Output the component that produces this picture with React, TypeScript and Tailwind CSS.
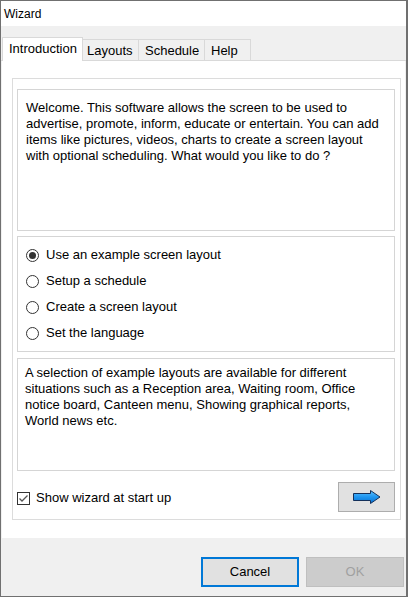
import React from "react";

const font = { fontFamily: '"Liberation Sans", Arial, sans-serif' };

function Radio({ checked, label }: { checked?: boolean; label: string }) {
  return (
    <div className="flex h-[26px] items-center">
      <div className="flex h-[13px] w-[13px] items-center justify-center rounded-full border border-[#333333] bg-white">
        {checked && <div className="h-[7px] w-[7px] rounded-full bg-[#333333]" />}
      </div>
      <span className="ml-[7px] text-[13px] leading-[16px] text-black">{label}</span>
    </div>
  );
}

export default function App() {
  return (
    <div
      className="flex h-[597px] w-[408px] flex-col border border-r-2 border-[#707070] bg-[#f0f0f0]"
      style={font}
    >
      {/* title bar */}
      <div className="flex h-[25px] shrink-0 items-center bg-white pl-[3px] text-[12px] text-black">
        Wizard
      </div>

      {/* tabs */}
      <div className="flex h-[35px] shrink-0 items-end border-b border-[#d9d9d9] pl-[1px] text-[13px] text-black">
        <div className="relative z-10 -mb-px flex h-[24px] w-[81px] items-start border border-b-0 border-[#d9d9d9] bg-white pl-[6px] pt-[3px] leading-[16px]">
          Introduction
        </div>
        <div className="flex h-[21px] w-[56px] items-start border-r border-t border-[#d9d9d9] pl-[4px] pt-[3px] leading-[16px]">
          Layouts
        </div>
        <div className="flex h-[21px] w-[66px] items-start border-r border-t border-[#d9d9d9] pl-[6px] pt-[3px] leading-[16px]">
          Schedule
        </div>
        <div className="flex h-[21px] w-[46px] items-start border-r border-t border-[#d9d9d9] pl-[6px] pt-[3px] leading-[16px]">
          Help
        </div>
      </div>

      {/* tab panel */}
      <div className="mx-[1px] flex h-[477px] shrink-0 flex-col bg-white pl-[10px] pt-[17px]">
        <div className="flex h-[442px] w-[389px] flex-col border border-[#dcdcdc] pl-[4px] pr-[5px] pt-[10px]">
          <div className="h-[142px] w-[378px] border border-[#d5d5d5] pl-[8px] pt-[10px] text-[13px] leading-[16px] text-black">
            Welcome. This software allows the screen to be used to
            <br />
            advertise, promote, inform, educate or entertain. You can add
            <br />
            items like pictures, videos, charts to create a screen layout
            <br />
            with optional scheduling. What would you like to do ?
          </div>

          <div className="mt-[5px] h-[116px] w-[378px] border border-[#d5d5d5] pl-[8px] pt-[5px]">
            <Radio checked label="Use an example screen layout" />
            <Radio label="Setup a schedule" />
            <Radio label="Create a screen layout" />
            <Radio label="Set the language" />
          </div>

          <div className="mt-[6px] h-[113px] w-[378px] border border-[#d5d5d5] pl-[7px] pt-[6px] text-[13px] leading-[16px] text-black">
            A selection of example layouts are available for different
            <br />
            situations such as a Reception area, Waiting room, Office
            <br />
            notice board, Canteen menu, Showing graphical reports,
            <br />
            World news etc.
          </div>

          <div className="mt-[11px] flex h-[30px] w-[378px] items-center justify-between">
            <div className="flex items-center pt-[2px]">
              <div className="flex h-[13px] w-[13px] items-center justify-center border border-[#333333] bg-white">
                <svg width="11" height="11" viewBox="0 0 11 11">
                  <path d="M1.5 5.5 L4 8 L9.5 2.5" fill="none" stroke="#555555" strokeWidth="1.3" />
                </svg>
              </div>
              <span className="ml-[6px] text-[13px] leading-[16px] text-black">Show wizard at start up</span>
            </div>
            <div className="flex h-[30px] w-[57px] items-center justify-center border border-[#adadad] bg-[#e1e1e1]">
              <svg width="28" height="14" viewBox="0 0 28 14">
                <defs>
                  <linearGradient id="ag" x1="0" y1="0" x2="0" y2="1">
                    <stop offset="0" stopColor="#5fc0ff" />
                    <stop offset="0.5" stopColor="#1e96f0" />
                    <stop offset="1" stopColor="#0a6fd0" />
                  </linearGradient>
                </defs>
                <path
                  d="M0.5 3.5 H17.5 V0.5 L27 7 L17.5 13.5 V10.5 H0.5 Z"
                  fill="url(#ag)"
                  stroke="#14305a"
                  strokeWidth="1"
                  strokeLinejoin="miter"
                />
              </svg>
            </div>
          </div>
        </div>
      </div>

      {/* bottom buttons */}
      <div className="flex flex-1 items-start justify-end pr-[2px] pt-[19px]">
        <div className="flex h-[30px] w-[98px] items-center justify-center border-2 border-[#0078d7] bg-[#e1e1e1] text-[13px] text-black">
          Cancel
        </div>
        <div className="ml-[7px] flex h-[30px] w-[98px] items-center justify-center border border-[#bfbfbf] bg-[#cccccc] text-[13px] text-[#a0a0a0]">
          OK
        </div>
      </div>
    </div>
  );
}
